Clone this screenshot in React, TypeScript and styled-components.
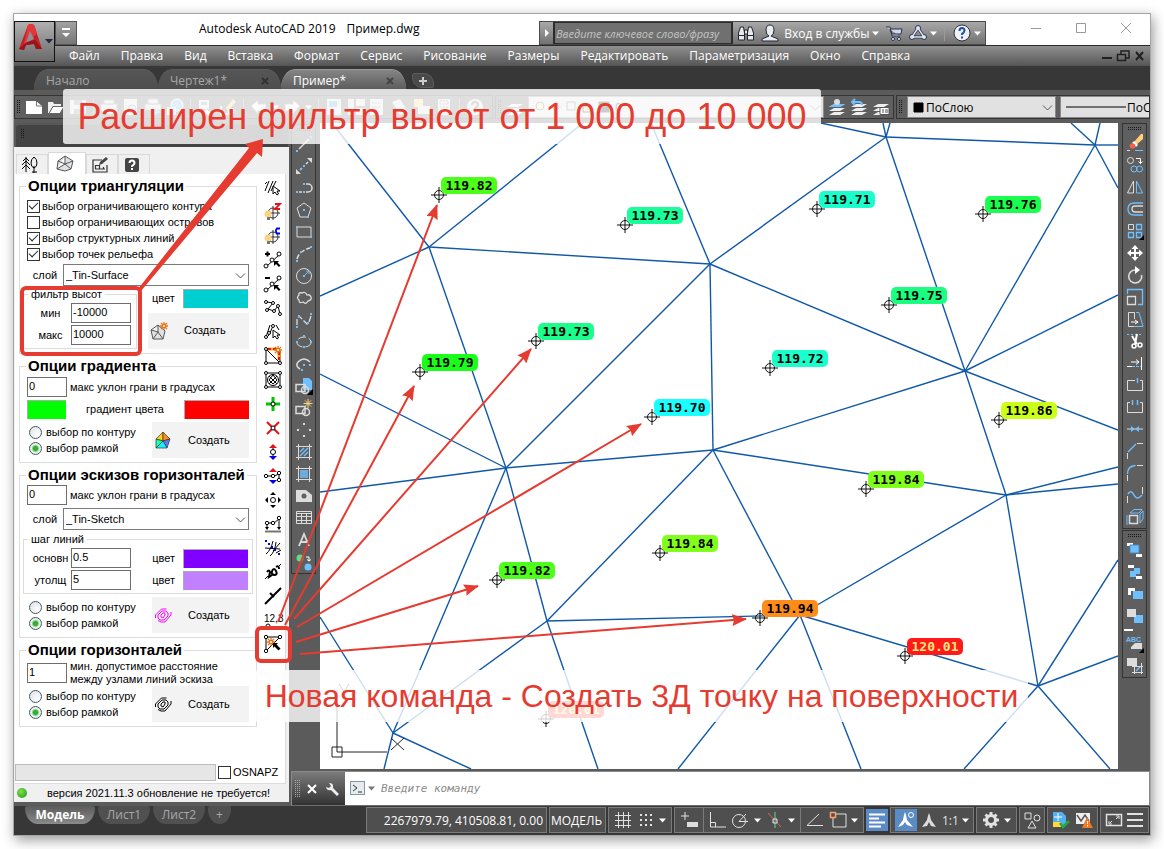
import React, { ReactNode } from "react";
import styled, { createGlobalStyle, css } from "styled-components";

const UI = `"Open Sans", "Noto Sans", sans-serif`;
const CLASSIC = `"Liberation Sans", Arial, sans-serif`;
const MONO = `"DejaVu Sans Mono", monospace`;
const RED = "#e53b30";
const SKY = "#6fc0ff";

const Global = createGlobalStyle`
  * { box-sizing: border-box; }
  body { margin: 0; background: #fff; font-family: ${UI}; font-size: 12px; color: #000; }
  button, input, select { font: inherit; color: inherit; margin: 0; }
  button { padding: 0; border: 0; background: none; cursor: pointer; }
`;

const Page = styled.div`padding: 13px;`;
const Window = styled.div`
  position: relative;
  display: flex;
  flex-direction: column;
  border: 1px solid #a6a6a6;
  background: #5b5b5b;
  box-shadow: 2px 4px 12px rgba(0, 0, 0, 0.4);
`;

/* ---------- icons ---------- */
const Svg = styled.svg<{ $s?: number }>`
  display: block;
  flex: none;
  width: ${(p) => p.$s ?? 18}px;
  height: ${(p) => p.$s ?? 18}px;
  overflow: visible;
`;
const Ico = ({ children, s = 18 }: { children: ReactNode; s?: number }) => (
  <Svg $s={s} viewBox={`0 0 ${s} ${s}`} fill="none" stroke="currentColor" aria-hidden="true">{children}</Svg>
);
const dots = (pts: number[][], r = 1, fill = SKY) =>
  pts.map(([x, y], i) => <rect key={i} x={x - r} y={y - r} width={r * 2} height={r * 2} fill={fill} stroke="none" />);
const rings = (pts: number[][], r = 2) =>
  pts.map(([x, y], i) => <circle key={i} cx={x} cy={y} r={r} fill="#fff" stroke="#000" />);

/* ---------- title bar ---------- */
const TitleBar = styled.header`
  display: flex;
  height: 31px;
  padding-top: 7px;
  background: #fff;
`;
const QuickMenu = styled.button`
  margin-left: 41px;
  width: 22px;
  height: 24px;
  display: grid;
  place-items: center;
  border: 1px solid #555;
  background: linear-gradient(#a2a2a2, #777);
  color: #fff;
`;
const Title = styled.h1`
  flex: 1;
  display: flex;
  gap: 11px;
  margin: 0;
  padding-left: 122px;
  font-size: 12px;
  line-height: 16px;
  font-weight: 400;
  white-space: pre;
`;
const InfoBar = styled.div`
  display: flex;
  align-items: center;
  width: 447px;
  height: 24px;
  padding-right: 4px;
  border: 1px solid #4a4a4a;
  background: linear-gradient(#a8a8a8, #727272);
  color: #fff;
`;
const Search = styled.input`
  width: 180px;
  height: 22px;
  margin-left: 13px;
  padding: 0 1px;
  border: 1px solid #2c2c2c;
  border-width: 1px 2px;
  background: #707070;
  font-size: 11px;
  font-style: italic;
  &::placeholder { color: #c4c4c4; opacity: 1; }
`;
const SearchWrap = styled.label`
  display: grid;
  align-items: center;
  & > * { grid-area: 1 / 1; }
`;
const InfoTools = styled.div`
  flex: 1;
  display: flex;
  align-items: center;
  justify-content: space-between;
  padding-left: 4px;
`;
const TextButton = styled.button`
  display: flex;
  align-items: center;
  gap: 3px;
  font-size: 12px;
  white-space: nowrap;
`;
const IconButton = styled.button`display: grid; place-items: center; flex: none;`;
const WinControls = styled.div`
  display: flex;
  gap: 29px;
  padding: 0 16px 0 42px;
  height: 16px;
  color: #999;
`;
const AppButton = styled.button`
  position: absolute;
  z-index: 2;
  left: 0;
  top: 7px;
  width: 41px;
  height: 41px;
  border: 1px solid #111;
  background: linear-gradient(#b0b0b0, #6b6b6b);
`;
const MenuBar = styled.nav`
  display: flex;
  align-items: center;
  gap: 21px;
  height: 21px;
  padding: 0 4px 0 55px;
  border-top: 1px solid #2b2b2b;
  background: linear-gradient(#909090, #555);
  color: #fff;
  a { color: inherit; text-decoration: none; white-space: nowrap; font-size: 12px; line-height: 16px; }
`;
const DocControls = styled.div`display: flex; gap: 2px; margin-left: auto; color: #202020;`;

/* ---------- document tabs ---------- */
const TabStrip = styled.div`
  display: flex;
  align-items: flex-end;
  height: 24px;
  padding-left: 20px;
  background: #373737;
`;
const DocTab = styled.div<{ $active?: boolean; $w: number }>`
  display: flex;
  align-items: center;
  justify-content: space-between;
  width: ${(p) => p.$w}px;
  height: 21px;
  padding: 2px 12px 0 12px;
  border-radius: 14px 14px 0 0 / 20px 20px 0 0;
  border-top: 1px solid ${(p) => (p.$active ? "#999" : "#5c5c5c")};
  background: ${(p) => (p.$active ? "linear-gradient(#858585, #5b5b5b)" : "linear-gradient(#565656, #4d4d4d)")};
  color: ${(p) => (p.$active ? "#fff" : "#a8a8a8")};
  font-size: 12px;
  line-height: 16px;
`;
const NewTab = styled.button`
  width: 22px;
  height: 15px;
  margin: 0 0 2px 6px;
  display: grid;
  place-items: center;
  border: 1px solid #5a5a5a;
  border-radius: 2px 10px 2px 10px;
  background: #4a4a4a;
  color: #ccc;
`;

/* ---------- top toolbars ---------- */
const ToolRow = styled.div`
  display: flex;
  gap: 2px;
  height: 33px;
  padding: 5px 0 4px;
  overflow: hidden;
`;
const Bar = styled.div<{ $w?: number }>`
  display: flex;
  align-items: center;
  gap: 4px;
  flex: ${(p) => (p.$w ? "none" : "1 0 0")};
  width: ${(p) => (p.$w ? p.$w + "px" : "auto")};
  height: 24px;
  padding-left: 2px;
  border: 1px solid #343434;
  background: #5f5f5f;
  color: #fff;
  overflow: hidden;
`;
const Grip = styled.span<{ $h?: boolean; $light?: boolean }>`
  flex: none;
  width: ${(p) => (p.$h ? "14px" : p.$light ? "6px" : "4px")};
  height: ${(p) => (p.$h ? "4px" : p.$light ? "18px" : "14px")};
  background-image: conic-gradient(from 0deg at 1px 1px, transparent 270deg, ${(p) => (p.$light ? "#a5a5a5" : "#161616")} 0);
  background-size: 2px 2px;
`;
const Sep = styled.span`flex: none; width: 1px; height: 16px; margin: 0 2px; background: #9b9b9b;`;
const ComboWrap = styled.span<{ $w: number }>`
  display: grid;
  grid-template-columns: 100%;
  align-items: center;
  flex: none;
  width: ${(p) => p.$w}px;
  color: #000;
  & > * { grid-area: 1 / 1; }
  & > svg:last-child { justify-self: end; margin-right: 4px; pointer-events: none; }
`;
const Combo = styled.select<{ $pad: number; $grey?: boolean }>`
  appearance: none;
  width: 100%;
  height: 22px;
  padding: 0 16px 0 ${(p) => p.$pad}px;
  border: 1px solid ${(p) => (p.$grey ? "#8a8a8a" : "#7a7a7a")};
  border-radius: 0;
  background: ${(p) => (p.$grey ? "#e1e1e1" : "#fff")};
`;
const ComboIcons = styled.span`
  z-index: 1;
  display: flex;
  gap: 4px;
  padding-left: 6px;
  pointer-events: none;
`;
const Chevron = () => <Ico s={9}><path d="M0 2.500 4.500 7 9 2.500" stroke="#555" /></Ico>;
const Tri = ({ c = "#fff" }: { c?: string }) => <Ico s={7}><path d="M0 1.500h7L3.500 5.500z" fill={c} stroke="none" /></Ico>;

/* ---------- palette ---------- */
const Body = styled.div`display: flex;`;
const Palette = styled.aside`
  flex: none;
  width: 276px;
  display: flex;
  flex-direction: column;
  padding-bottom: 4px;
  font-family: ${CLASSIC};
  font-size: 11px;
  line-height: 13px;
`;
const PaletteHead = styled.div`
  height: 24px;
  padding: 4px 5px;
  border: 2px solid #575757;
  border-bottom: 0;
  border-radius: 5px 5px 0 0;
  background: #434343;
  & > ${Grip} { display: block; height: 10px; }
`;
const PaletteBody = styled.div`
  flex: 1;
  display: flex;
  flex-direction: column;
  margin-right: 1px;
  padding: 5px 3px 0 1px;
  background: #f0f0f0;
`;
const PaletteTabs = styled.div`display: flex; align-items: flex-end; height: 22px; padding-left: 1px;`;
const PaletteTab = styled.button<{ $active?: boolean }>`
  display: grid;
  place-items: center;
  width: ${(p) => (p.$active ? 38 : 32)}px;
  height: ${(p) => (p.$active ? 22 : 20)}px;
  padding-right: 4px;
  border: 1px solid #d9d9d9;
  border-bottom: 0;
  background: ${(p) => (p.$active ? "#fff" : "#f0f0f0")};
`;
const PaletteSheet = styled.div`
  flex: 1;
  display: flex;
  padding: 2px 4px 0 4px;
  border: 1px solid #dcdcdc;
  border-width: 0 1px 0 0;
  background: #fff;
`;
const Groups = styled.div`width: 238px; padding-top: 2px; display: flex; flex-direction: column; gap: 4px;`;
const Group = styled.fieldset<{ $top: number }>`
  min-width: 0;
  margin: 0;
  padding: ${(p) => p.$top}px 7px 4px 7px;
  border: 1px solid #dcdcdc;
  & > legend {
    margin-left: -1px;
    padding: 0 2px;
    font-weight: 700;
    font-size: 15px;
    line-height: 16px;
    white-space: nowrap;
  }
`;
const SubGroup = styled.fieldset<{ $w?: number }>`
  min-width: 0;
  width: ${(p) => (p.$w ? p.$w + "px" : "auto")};
  margin: 0 -4px;
  padding: 3px 4px 3px 6px;
  border: 1px solid #dcdcdc;
  & > legend { margin-left: -2px; padding: 0 3px; line-height: 12px; }
`;
const CheckLabel = styled.label<{ $gap?: number }>`
  display: flex;
  align-items: center;
  gap: ${(p) => p.$gap ?? 2}px;
  height: 16px;
  white-space: nowrap;
`;
const tick = css`
  appearance: none;
  flex: none;
  width: 13px;
  height: 13px;
  border: 1px solid #333;
  background: #fff;
`;
const Tick = styled.input`
  ${tick}
  &:checked { display: grid; place-items: center; }
  &:checked::after {
    content: "";
    width: 8px;
    height: 4px;
    margin-bottom: 3px;
    border: solid #222;
    border-width: 0 0 1px 1px;
    transform: rotate(-45deg);
  }
`;
const Radio = styled.input`
  ${tick}
  border-color: #44586b;
  border-radius: 50%;
  background: radial-gradient(circle at 70% 70%, #fff, #dcdfe2);
  &:checked { background: radial-gradient(circle, #2fae2f 0 2px, #e8f3e8 4px); }
`;
const Stack = styled.div<{ $gap?: number }>`
  display: flex;
  flex-direction: column;
  gap: ${(p) => p.$gap ?? 0}px;
`;
const FieldName = styled.span<{ $w: number }>`
  width: ${(p) => p.$w}px;
  text-align: center;
  white-space: nowrap;
`;
const Field = styled.input<{ $w: number }>`
  width: ${(p) => p.$w}px;
  height: 20px;
  padding: 0 1px 2px;
  border: 1px solid #6e6e6e;
  background: #fff;
  font-size: 11px;
`;
const LabelRow = styled.label<{ $gap?: number; $pad?: number }>`
  display: flex;
  align-items: center;
  gap: ${(p) => p.$gap ?? 0}px;
  padding-left: ${(p) => p.$pad ?? 0}px;
  white-space: nowrap;
`;
const Swatch = styled.button<{ $c: string; $w: number }>`
  flex: none;
  width: ${(p) => p.$w}px;
  height: 19px;
  border: 1px solid #aaa;
  border-width: 1px 0 0 1px;
  background: ${(p) => p.$c};
`;
const Create = styled.button<{ $w?: number }>`
  flex: none;
  display: flex;
  align-items: center;
  gap: 16px;
  width: ${(p) => p.$w ?? 97}px;
  height: 36px;
  padding-left: 2px;
  background: #f3f3f3;
  font-size: 11px;
`;
const Split = styled.div`display: flex; justify-content: space-between; align-items: center;`;
const Commands = styled.div`
  display: flex;
  flex-direction: column;
  align-items: center;
  width: 22px;
  margin-left: 5px;
  color: #000;
`;
const Command = styled.button`
  display: grid;
  place-items: center;
  width: 22px;
  height: 24px;
`;
const PaletteFoot = styled.div`
  display: flex;
  align-items: center;
  gap: 2px;
  height: 22px;
  background: #fff;
  border-bottom: 1px solid #dcdcdc;
  border-right: 1px solid #dcdcdc;
`;
const Progress = styled.div`width: 201px; height: 17px; border: 1px solid #bcbcbc; background: #e6e6e6;`;
const Version = styled.div`
  display: flex;
  align-items: center;
  gap: 20px;
  height: 18px;
  padding-left: 2px;
  white-space: nowrap;
`;
const Led = styled.span`
  width: 10px;
  height: 10px;
  border-radius: 50%;
  background: radial-gradient(circle at 40% 35%, #7ede50, #1e9a10);
`;

/* ---------- work area ---------- */
const Main = styled.main`flex: 1; min-width: 0; display: flex; flex-direction: column; gap: 2px;`;
const Work = styled.div`flex: 1; display: flex;`;
const SideRail = styled.div<{ $w: number; $pad: string }>`
  flex: none;
  width: ${(p) => p.$w}px;
  padding: ${(p) => p.$pad};
  display: flex;
  flex-direction: column;
  gap: 1px;
`;
const ToolColumn = styled.div`
  display: flex;
  flex-direction: column;
  align-items: center;
  padding: 3px 0 0;
  border: 1px solid #343434;
  background: #5f5f5f;
  color: #dcdcdc;
  & > ${Grip} { margin-bottom: 1px; }
`;
const Tool = styled.button`display: grid; place-items: center; width: 22px; height: 22px;`;
const Fly = styled.span`width: 9px; height: 2px; margin: 2px 12px 2px 0; background: #fff;`;
const Canvas = styled.section`
  position: relative;
  flex: 1;
  min-width: 0;
  overflow: hidden;
  background: #fff;
`;
const Mesh = styled.svg`display: block; width: 100%; height: 646px;`;
const PointLabel = styled.span<{ $c: string; $fg?: string }>`
  position: absolute;
  width: 56px;
  border-radius: 5px;
  background: ${(p) => p.$c};
  color: ${(p) => p.$fg ?? "#000"};
  font: 700 13px/17px ${MONO};
  text-align: center;
`;
const CommandLine = styled.div`display: flex; height: 35px; border: 1px solid #8a8a8a; border-bottom-color: #6d6d6d; margin-left: 1px;`;
const CommandHandle = styled.div`
  display: flex;
  align-items: center;
  gap: 5px;
  width: 53px;
  padding-left: 3px;
  background: linear-gradient(#7b7b7b, #333);
  color: #fff;
`;
const Prompt = styled.label`
  flex: 1;
  display: flex;
  align-items: center;
  gap: 3px;
  padding-left: 5px;
  background: #fff;
`;
const PromptInput = styled.input`
  flex: 1;
  margin-left: 3px;
  padding: 0;
  border: 0;
  outline: 0;
  font: italic 11px ${MONO};
  &::placeholder { color: #8c8c8c; opacity: 1; }
`;

/* ---------- status bar ---------- */
const Bottom = styled.footer`
  display: flex;
  justify-content: space-between;
  height: 29px;
  background: #373737;
`;
const SheetTabs = styled.div`display: flex; gap: 3px; padding-left: 11px;`;
const SheetTab = styled.button<{ $active?: boolean; $w: number }>`
  width: ${(p) => p.$w}px;
  height: 18px;
  border-radius: 2px 2px 14px 14px / 2px 2px 18px 18px;
  background: ${(p) => (p.$active ? "linear-gradient(#5b5b5b, #8a8a8a)" : "#505050")};
  color: ${(p) => (p.$active ? "#fff" : "#a8a8a8")};
  font-size: 12px;
  font-weight: ${(p) => (p.$active ? 700 : 400)};
  line-height: 16px;
`;
const Status = styled.div`display: flex; align-items: center; gap: 2px; padding: 0 1px 1px 0; color: #e2e2e2;`;
const Cell = styled.div<{ $w: number; $end?: boolean }>`
  display: flex;
  align-items: center;
  justify-content: ${(p) => (p.$end ? "flex-end" : "space-evenly")};
  width: ${(p) => p.$w}px;
  height: 26px;
  padding: 0 ${(p) => (p.$end ? 3 : 0)}px;
  border: 1px solid #7b7b7b;
  background: #4f4f4f;
  color: ${(p) => (p.$end ? "#fff" : "inherit")};
  font-size: 12px;
  white-space: nowrap;
`;
const Toggle = styled.button<{ $on?: boolean }>`
  display: grid;
  place-items: center;
  width: 22px;
  height: 22px;
  background: ${(p) => (p.$on ? "#5b8bc5" : "none")};
  color: ${(p) => (p.$on ? "#fff" : "inherit")};
`;
const Rule = styled.span`width: 1px; height: 24px; background: #7b7b7b;`;

/* ---------- annotations ---------- */
const Marks = styled.svg`
  position: absolute;
  z-index: 4;
  left: -14px;
  top: -14px;
  width: 1164px;
  height: 849px;
  pointer-events: none;
`;
const Banner = styled.p<{ $x: number; $y: number; $w: number; $h: number; $size: number }>`
  position: absolute;
  z-index: 3;
  left: ${(p) => p.$x}px;
  top: ${(p) => p.$y}px;
  width: ${(p) => p.$w}px;
  height: ${(p) => p.$h}px;
  margin: 0;
  border-radius: 3px;
  background: rgba(255, 255, 255, 0.8);
  color: ${RED};
  font: ${(p) => p.$size}px / ${(p) => p.$h}px ${CLASSIC};
  text-align: center;
  white-space: nowrap;
`;

/* ---------- data ---------- */
const menu = ["Файл", "Правка", "Вид", "Вставка", "Формат", "Сервис", "Рисование", "Размеры", "Редактировать", "Параметризация", "Окно", "Справка"];

const edges = [
  [332, 123, 429, 247], [320, 296, 429, 247], [583, 123, 429, 247], [429, 247, 506, 468], [429, 247, 710, 264],
  [651, 123, 710, 264], [710, 264, 886, 137], [821, 123, 886, 137], [883, 123, 886, 137], [890, 123, 886, 137],
  [886, 137, 1095, 145], [886, 137, 965, 371], [1071, 123, 1095, 145], [1100, 123, 1095, 145], [1095, 145, 1118, 145],
  [1095, 145, 965, 371], [1095, 145, 1118, 188], [710, 264, 965, 371], [710, 264, 713, 450], [710, 264, 506, 468],
  [320, 374, 506, 468], [320, 492, 506, 468], [506, 468, 713, 450], [713, 450, 965, 371], [713, 450, 1006, 495],
  [713, 450, 800, 615], [713, 450, 547, 621], [506, 468, 547, 621], [506, 468, 393, 733], [965, 371, 1006, 495],
  [965, 371, 1118, 295], [965, 371, 1118, 430], [1006, 495, 1118, 467], [1006, 495, 1118, 484], [1006, 495, 1038, 686],
  [1006, 495, 800, 615], [1038, 686, 1118, 560], [1038, 686, 1118, 656], [1038, 686, 800, 615], [1038, 686, 1110, 769],
  [1038, 686, 964, 769], [800, 615, 547, 621], [547, 621, 598, 769], [800, 615, 678, 769], [800, 615, 861, 769],
  [547, 621, 393, 733], [320, 617, 393, 733], [393, 733, 384, 769], [393, 733, 471, 769],
];
const points: [number, number, string, string, string?][] = [
  [439, 195, "119.82", "#4dff1a"], [625, 225, "119.73", "#1aff99"], [817, 209, "119.71", "#1affcc"],
  [983, 214, "119.76", "#1aff4d"], [889, 305, "119.75", "#1aff80"], [536, 341, "119.73", "#1aff8c"],
  [420, 372, "119.79", "#1aff1a"], [770, 368, "119.72", "#1affcc"], [652, 417, "119.70", "#1affff"],
  [999, 420, "119.86", "#ccff1a"], [866, 489, "119.84", "#80ff1a"], [660, 553, "119.84", "#80ff1a"],
  [497, 580, "119.82", "#4dff1a"], [760, 618, "119.94", "#ff8c1a"], [905, 656, "120.01", "#ff1a1a", "#ffe680"],
  [546, 719, "120.01", "#ff3a2a", "#ffe680"],
];
const arrows = [
  [278, 622, 437, 205], [285, 625, 414, 386], [294, 619, 531, 349], [297, 627, 641, 424], [296, 642, 478, 586], [300, 654, 746, 619],
];

const pointer = <path d="M9 7v8l2-2 2 3 1.500-1-1.500-3h3z" fill="#fff" stroke="#000" />;
const smallArrow = <path d="M10 10h5l-1.500 1.500 3 3-1.500 1.500-3-3L10 15z" fill="#000" stroke="none" />;
const bulb = <><circle cx="9" cy="10" r="5" stroke="#333" /><path d="M9 3v14M3 10h13" stroke="#333" /><circle cx="4" cy="11" r="3.500" fill="#fdd27e" stroke="none" /><rect x="3" y="14" width="3" height="3" fill="#777" stroke="none" /></>;
const star = (x: number, y: number) => (
  <g transform={`translate(${x} ${y})`}><path d="M-4 0h8M0-4v8M-3-3l6 6M3-3l-6 6" stroke="#e8740c" strokeWidth="1.300" /><circle r="1.600" fill="#fff3a0" stroke="#d33" strokeWidth=".5" /></g>
);

const commands: [string, ReactNode][] = [
  ["Линии", <><path d="M1 12 5 2M4 14 9 2M7 12l5-10M1 5l2-2" />{pointer}</>],
  ["Высота Z", <>{bulb}<path d="M11 1h5l-5 5h5" stroke="#e11" strokeWidth="1.800" /></>],
  ["Цвет C", <>{bulb}<path d="M16 1.500h-3L12 3v2l1 1.500h3" stroke="#00e" strokeWidth="1.800" /></>],
  ["Добавить связь", <><path d="M1 3h5M3.500.5v5" strokeWidth="2" /><path d="m3 15 12-11" />{rings([[2, 15], [8, 9], [15, 3]])}{smallArrow}</>],
  ["Удалить связь", <><path d="M1 3h5" strokeWidth="2" /><path d="m3 15 12-11" />{rings([[2, 15], [8, 9], [15, 3]])}{smallArrow}</>],
  ["Полилиния", <><path d="m3 3 6 1-5 6 6 2 4-5 2 8" />{rings([[2, 3], [9, 4], [3, 11], [10, 12], [14, 7], [16, 15]], 1.5)}</>],
  ["Контур", <><path d="M6 2 2 14M9 3 5 12l-3 3M12 2l3 5" />{rings([[2, 14], [5, 10], [9, 3]], 1.5)}{pointer}</>],
  ["Рамка", <><path d="M2 2v14h14V4M2 2l14 14M2 2h12" /><path d="M4 2h8M15 5v8" stroke="#f2b51a" strokeWidth="3" /><path d="M4 2h8M15 5v8" stroke="#e11" strokeDasharray="3 2" strokeWidth="2" />{rings([[2, 2], [2, 16], [16, 16]], 1.5)}{star(14, 3)}</>],
  ["Область", <><path d="M2 2h14v14H2zM5 5l8 8M13 5l-8 8M9 4l4 5-4 4-4-4z" /><circle cx="9" cy="9" r="5.500" />{rings([[2, 2], [16, 2], [2, 16], [16, 16]], 1.5)}</>],
  ["Добавить точку", <><path d="M9 2v14M2 9h14" stroke="#00c400" strokeWidth="3" />{rings([[9, 9]])}</>],
  ["Удалить точку", <><path d="m3 3 12 12M15 3 3 15" stroke="#e11" strokeWidth="2" />{rings([[9, 9]])}</>],
  ["Поднять точку", <><path d="M9 4v10" /><path d="M5 5h8L9 1z" fill="#e11" stroke="none" /><path d="M5 13h8l-4 4z" fill="#00e" stroke="none" />{rings([[9, 9]], 2.5)}</>],
  ["Поднять линию", <><path d="M5 5h8L9 1z" fill="#e11" stroke="none" /><path d="M5 13h8l-4 4z" fill="#00e" stroke="none" /><path d="M2 9h8l5-2v6" />{rings([[2, 9], [9, 9], [15, 6], [15, 13]], 1.7)}</>],
  ["Переместить", <>{rings([[9, 9]], 2.5)}<path d="M6 4h6L9 1zM6 14h6l-3 3zM4 6v6L1 9zM14 6v6l3-3z" fill="#000" stroke="none" /></>],
  ["На поверхность", <><path d="M2 8h8l5-4M3 9v4M15 5v8" />{rings([[3, 8], [9, 8], [15, 3]], 1.7)}<path d="M1 16.500h16" stroke="#777" strokeWidth="2" /><path d="M1 12h4l-2 3zM13 12h4l-2 3z" fill="#000" stroke="none" /></>],
  ["Обрезать", <><path d="M2 15Q7 11 9 2M6 17q5-4 6-14M1 9l15 1M9 12l7-8M12 14l5-3" />{dots([[2, 2], [5, 5], [8, 8], [11, 11], [15, 15]], 1, "#00e")}</>],
  ["Подпись", <><path d="M1 16l3-3M14 4l3-3" /><path d="M3 9q2-3 3 0l-1 5 3-2M8 8q2-4 4 0t-2 4q-3-1-2-4M12 4q3-2 3 2" strokeWidth="2" /></>],
  ["Бергштрих", <path d="M1 17 17 1M6 6l4 4" strokeWidth="2" />],
  ["Отметка 12,3", <><text x="0" y="11" fontFamily={CLASSIC} fontSize="10" fill="#000" stroke="none">12,3</text>{rings([[4, 15]])}</>],
  ["3Д точка", <><path d="M2 2h14L2 16z" />{rings([[2, 2], [16, 2], [2, 16]], 1.7)}{star(7, 7)}<path d="M9 8h5l-1.500 1.500 4 4-2 2-4-4L9 13z" fill="#000" stroke="none" /></>],
];

const draw: [string, ReactNode][] = [
  ["Отрезок", <><path d="m4 14 10-10" strokeWidth="1.500" />{dots([[2, 16], [16, 2]])}</>],
  ["Прямая", <><path d="m5 13 2-2M11 7l2-2" strokeWidth="1.500" /><path d="M1 17v-5l5 5zM17 1v5l-5-5z" fill="#dcdcdc" stroke="none" />{dots([[9, 9], [6, 12]])}</>],
  ["Полилиния", <><path d="M4 13h3M11 13h2a4 4 0 0 0 0-8h-2" strokeWidth="1.500" />{dots([[2, 13], [9, 13], [9, 5]])}</>],
  ["Многоугольник", <><path d="m9 2 7 5-3 9H5L2 7z" />{dots([[9, 9], [13, 16]])}</>],
  ["Прямоугольник", <><path d="M2 4h14v10H2z" />{dots([[2, 4], [16, 14]])}</>],
  ["Дуга", <><path d="M2 14Q4 6 15 3" strokeDasharray="5 2" strokeWidth="1.500" />{dots([[2, 16], [6, 7], [16, 2]])}</>],
  ["Круг", <><circle cx="9" cy="9" r="7.500" /><path d="m10 8 4-4m-3 0h3v3" stroke={SKY} />{dots([[9, 9]])}</>],
  ["Облако", <path d="M4 6q-3 3 0 5 0 4 4 2 3 3 5-1 4-1 3-4-1-3-4-2-2-4-5-2-4-1-3 2z" strokeWidth="1.300" />],
  ["Сплайн", <><path d="M2 14V8l2-3 8 8 2-2 2-6" strokeDasharray="6 2" strokeWidth="1.300" />{dots([[2, 16], [4, 5], [13, 12], [16, 3]])}</>],
  ["Эллипс", <><ellipse cx="9" cy="9" rx="7" ry="5" strokeDasharray="8 3" />{dots([[9, 3], [2, 9], [16, 9], [9, 14]])}</>],
  ["Эллиптическая дуга", <><path d="M5 14Q0 11 3 7q6-6 12 0" strokeWidth="1.500" />{dots([[9, 10], [15, 10], [7, 15]])}</>],
  ["Вставить блок", <><path d="M8 1h6l3 3v9H8z" fill={SKY} stroke="none" /><path d="M18 12v6h-6z" fill="#000" stroke="none" /><path d="M1 7.500h9v7H1z" strokeWidth="1.500" /><circle cx="10" cy="13" r="3.500" strokeWidth="1.500" /></>],
  ["Создать блок", <><path d="M1 7.500h9v7H1z" strokeWidth="1.500" /><circle cx="11" cy="13" r="3.500" strokeWidth="1.500" /><path d="M13 0v9M8.500 4.500h9M10 1.500l6 6M16 1.500l-6 6" stroke="#ffd27a" /></>],
  ["Точка", dots([[9, 3], [3, 9], [15, 9], [9, 15]], 1, "#dcdcdc")],
  ["Штриховка", <><path d="m5 9 4-4M5 13l8-8M9 13l4-4" stroke={SKY} strokeWidth="1.500" /><path d="M3.500 1v16M14.500 1v16M1 3.500h16M1 14.500h16" /></>],
  ["Градиент", <><rect x="5" y="5" width="8" height="8" fill={SKY} fillOpacity=".8" stroke="none" /><path d="M3.500 1v16M14.500 1v16M1 3.500h16M1 14.500h16" /></>],
  ["Область", <><path d="M1 3h10l6 5v7H1z" fill="#dcdcdc" stroke="none" /><circle cx="9" cy="9" r="2.500" fill="#5f5f5f" stroke="none" /></>],
  ["Таблица", <path d="M1.500 2.500h15v12h-15zM1 4.500h16M2 7.500h15M2 11.500h15M6.500 4v11M11.500 4v11" />],
  ["Текст", <path d="m4 15 5-12 5 12M6 11h6" strokeWidth="1.800" />],
  ["Добавить выбранные", <><circle cx="5" cy="5" r="3.500" fill="#5fdc8a" stroke="none" /><circle cx="13" cy="14" r="3.500" fill={SKY} stroke="none" /><path d="M11 4h3v4m-2-1.500L14 8l2-1.500" stroke="#fff" /></>],
];

const modify: [string, ReactNode][] = [
  ["Стереть", <><path d="m8 8 7-8h2v5l-7 6z" fill="#ffd27a" stroke="none" /><path d="m8 7 4 4-2 2-4-4z" fill="#fff" stroke="none" /><circle cx="6.500" cy="12" r="2.800" fill="#f0604a" stroke="none" /><path d="M1 16.500h3" /><path d="M9 16.500h8" stroke={SKY} /></>],
  ["Копировать", <><circle cx="4.500" cy="4.500" r="3" /><path d="M10 2.500h4.500v5m-2-2 2 2 2-2" stroke="#fff" /><circle cx="8" cy="13" r="3" stroke={SKY} /><circle cx="13.500" cy="13" r="3" stroke={SKY} /></>],
  ["Зеркало", <><path d="M7.500 3v12h-6z" /><path d="M10.500 3v12h6z" stroke={SKY} /></>],
  ["Подобие", <><path d="M17 3H8q-6 0-6 6t6 6h9" stroke={SKY} strokeWidth="1.300" /><path d="M17 6H9q-3 0-3 3t3 3h8" strokeWidth="1.300" /></>],
  ["Массив", <><path d="M2.500 2.500h5v5h-5z" /><path d="M10.500 2.500h5v5h-5zM2.500 10.500h5v5h-5zM10.500 10.500h5v5h-5z" stroke={SKY} strokeWidth="1.300" /><path d="M18 13v5h-5z" fill="#000" stroke="none" /></>],
  ["Переместить", <><path d="M9 3v12M3 9h12" stroke="#fff" strokeWidth="2" /><path d="M5.500 5 9 1l3.500 4zM5.500 13 9 17l3.500-4zM5 5.500 1 9l4 3.500zM13 5.500 17 9l-4 3.500z" fill="#fff" stroke="none" /></>],
  ["Повернуть", <><path d="M10 4a6.500 6.500 0 1 0 5.500 5" strokeWidth="1.600" /><path d="m9 0 5 4-5 4z" fill="#fff" stroke="none" /></>],
  ["Масштаб", <><path d="M1.500 6V1.500h15v15H12" stroke={SKY} strokeWidth="1.300" /><path d="M1.500 8.500h8v8h-8z" strokeWidth="1.300" /></>],
  ["Растянуть", <><path d="M8.500 9V2.500h-6v14h6" /><path d="M10 2.500h3l4 14H9" stroke={SKY} /><path d="M5 12h7m-3-2 3 2-3 2" stroke="#fff" /></>],
  ["Обрезать", <><path d="M1 2.500h16" stroke={SKY} strokeDasharray="2 2" /><path d="m6 4 5 8M11 2 9 12" stroke="#fff" strokeWidth="2" /><circle cx="8" cy="14" r="2" stroke="#fff" strokeWidth="1.500" /><circle cx="14" cy="13" r="2" stroke="#fff" strokeWidth="1.500" /></>],
  ["Удлинить", <><path d="M15.500 3v13M5 8h8m-3-2.500L13 8l-3 2.500M1 12.500h5" stroke="#fff" /><path d="M6 12.500h9" stroke={SKY} strokeDasharray="3 1" /></>],
  ["Разорвать в точке", <><path d="M9 4.500H1.500v10h15v-10H14" /><path d="M11.500 2v5" stroke={SKY} strokeWidth="1.500" /></>],
  ["Разорвать", <><path d="M4 4.500H1.500v10h15v-10H14" /><path d="M6.500 2v5M11.500 2v5" stroke={SKY} strokeWidth="1.500" /></>],
  ["Соединить", <><path d="M1 9h16" /><path d="M5 6v6l4-3zM13 6v6L9 9z" fill={SKY} stroke="none" /></>],
  ["Фаска", <><path d="M1.500 17v-6M11 1.500h6" /><path d="m2 10 8-8" stroke={SKY} strokeWidth="1.300" /></>],
  ["Сопряжение", <><path d="M1.500 17v-6M11 1.500h6" /><path d="M1.500 10q0-8 8-8.500" stroke={SKY} strokeWidth="1.300" /></>],
  ["Слияние", <><path d="M1.500 17v-7M16.500 1v7" /><path d="M2 8q3-5 6 1t8 0" stroke={SKY} strokeWidth="1.500" /></>],
  ["Расчленить", <><path d="M3.500 7.500h8v8h-8z" strokeWidth="1.500" /><path d="M4 5l4-3.500h8L13 5zM14 6l3-3v8l-3 4zM1 7v10" stroke={SKY} /></>],
];
const order: [string, ReactNode][] = [
  ["На передний план", <><path d="M1 2h6v3H1zM10 13h6v3h-6z" fill="#fff" stroke="none" /><path d="M4 4h9v8H4z" fill={SKY} stroke="#4d88b8" /></>],
  ["На задний план", <><path d="M2 2h6v3H2zM10 13h6v3h-6z" fill="#fff" stroke="none" /><path d="M8 5h6v6h-4v3H4V8h4z" fill={SKY} stroke="none" /></>],
  ["Перед объектом", <><path d="M2 3h7v3H5v4H2z" fill="#fff" stroke="none" /><path d="M7 6h10v8H7z" fill={SKY} stroke="none" /></>],
  ["За объектом", <><path d="M8 8h9v8H8z" fill={SKY} stroke="none" /><path d="M1 2h9v8H1z" fill="#ddd" stroke="none" /></>],
];
const order2: [string, ReactNode][] = [
  ["Тексты вперед", <><text x="0" y="7" fontFamily={CLASSIC} fontSize="7" fontWeight="700" fill={SKY} stroke="none">ABC</text><path d="m5 12 4-4h7v6H5z" fill="#ddd" stroke="none" /><path d="M18 13v5h-5z" fill="#000" stroke="none" /></>],
  ["Штриховка назад", <><path d="M1 1h10v8H1z" fill="#ddd" stroke="none" /><path d="M8.500 7v10M15.500 6v11M6 9.500h11M6 15.500h11" /><path d="m10 14 4-4" stroke={SKY} strokeWidth="1.500" /></>],
];

const layersIcon = (extra?: ReactNode) => (
  <Ico><path d="M1 13l5-3h11l-5 3zM1 17l5-3h11l-5 3zM1 9l5-3h11l-5 3z" fill="#eee" stroke="none" />{extra}</Ico>
);
const std: ReactNode[] = [
  <Ico><path d="M1 3h10l6 5v8H1z" fill="#fff" stroke="none" /><path d="M11.500 3v5H17" stroke="#777" /></Ico>,
  <Ico><path d="M1 15V4h5l1 2h7v2H6L2 15" fill="#eee" stroke="none" /><path d="M6 8.500h11l-4 7H2z" fill="#fff" stroke="#666" /></Ico>,
  <Ico><path d="M1 2h16v14H1z" fill="#ddd" stroke="none" /><path d="M5 2h8v5H5zM5 11h8v5H5z" fill="#888" stroke="none" /></Ico>,
  <Sep />,
  <Ico><path d="M1 6h16v7H1zM4 2h10v4H4zM4 12h10v4H4z" fill="#ddd" stroke="#888" /></Ico>,
  <Ico><path d="M2 1h13v16H2z" fill="#ddd" stroke="none" /><circle cx="10" cy="11" r="4" stroke="#777" /></Ico>,
  <Ico><path d="M1 6h16v6H1zM4 1h10v5H4z" fill="#ddd" stroke="#888" /><path d="m9 10 8 4-8 4z" fill={SKY} stroke="none" /></Ico>,
  <Ico><circle cx="11" cy="7" r="6" fill="#6ab4e8" stroke="#fff" /><path d="M1 9h9v8H1z" fill="#ddd" stroke="none" /></Ico>,
  <Sep />,
  <Ico><path d="M2 2h10v9H2z" fill="#ddd" stroke="none" /><path d="M4 4h6v3H4z" fill="#59a" stroke="none" /><path d="m9 11 7 5-4 2-5-4z" fill="#fff" stroke="none" /></Ico>,
  <Ico><path d="m7 10 7-9 3 3-8 8z" fill="#ffc660" stroke="none" /><path d="M2 8v8h8" stroke="#ddd" strokeWidth="2" /><circle cx="12" cy="13" r="3" /></Ico>,
  <Sep />,
  <Ico><path d="M1 8l7-6v4h8v7H8v3z" fill="#fff" stroke="#777" /></Ico>,
  <Tri />,
  <Ico><path d="M17 8l-7-6v4H2v7h8v3z" fill="#fff" stroke="#777" /></Ico>,
  <Tri />,
  <Sep />,
  <Ico><path d="M2 1h14v16H2z" fill="#ddd" stroke="none" /><path d="M4 3h8v6H4z" fill="#59c" stroke="none" /></Ico>,
  <Ico><path d="M1 1h6v16H1zM9 1h9v7H9zM9 10h9v7H9z" fill="#ddd" stroke="none" /></Ico>,
  <Ico><path d="M1 1h13v16H1z" fill="#ddd" stroke="none" /><path d="M3 5h9M3 9h9M3 13h9" stroke="#777" strokeDasharray="2 1" /></Ico>,
  <Ico><path d="M1 4l8-3 8 13-8 3z" fill="#ddd" stroke="none" /></Ico>,
  <Ico><path d="M1 1h9v8H1z" fill="#ffd27a" stroke="none" /><path d="M5 8h12v8H5z" fill="#ddd" stroke="none" /></Ico>,
  <Ico><path d="M3 1h12v16H3z" fill="#ddd" stroke="none" /><path d="M5 3h8v3H5zM5 9h8M5 12h8M5 15h8" stroke="#666" strokeDasharray="2 1" /></Ico>,
  <Sep />,
  <Ico><circle cx="9" cy="9" r="8" fill="#ddd" stroke="none" /><path d="M6 7q0-3 3-3t3 3q0 1-3 3v1M9 13v2" stroke="#555" strokeWidth="2" /></Ico>,
];

const Rhombs = ({ c }: { c: string }) => (
  <Ico><g stroke={c}><path d="M1.500 12V9l6-6h5M4 14.500 7 16h4l6-7V6" /><path d="M4 12V9l4-4h4l2 2v3l-4 4H6z" /><path d="M7 11V9l2-2h2v2l-2 3z" /></g></Ico>
);

const Buttons = ({ items }: { items: [string, ReactNode][] }) => (
  <>{items.map(([name, art]) => <Tool key={name} aria-label={name}><Ico>{art}</Ico></Tool>)}</>
);
const Choice = ({ name }: { name: string }) => (
  <Stack>
    <CheckLabel $gap={4}><Radio type="radio" name={name} />выбор по контуру</CheckLabel>
    <CheckLabel $gap={4}><Radio type="radio" name={name} defaultChecked />выбор рамкой</CheckLabel>
  </Stack>
);
const ChoicePad = styled.div`padding-left: 2px;`;
const Layer = ({ value }: { value: string }) => (
  <LabelRow>
    <FieldName $w={36}>слой</FieldName>
    <ComboWrap $w={186}><Combo $pad={2}><option>{value}</option></Combo><Chevron /></ComboWrap>
  </LabelRow>
);
const ColorRow = ({ c, pad }: { c: string; pad?: number }) => (
  <LabelRow $gap={8} $pad={pad}>цвет<Swatch $c={c} $w={65} aria-label="цвет" /></LabelRow>
);

export default function App() {
  return (
    <Page>
      <Global />
      <Window>
        <AppButton aria-label="AutoCAD">
          <svg width="39" height="39" viewBox="0 0 39 39" aria-hidden="true">
            <path d="M4 27 13 3q2-2 6 0l8 24h-6l-2-5-8 1-2 5z" fill="#c32128" />
            <path d="M13 3q2-2 6 0l3 8-9 10-4 1z" fill="#e2383c" />
            <path d="m15 9 4 8-8 4z" fill="#8f9096" />
            <path d="m4 27 8-7 8-2 7 9h-6l-2-5-8 1-2 5z" fill="#9c1219" />
            <path d="M30 17h8l-4 4.500z" fill="#222b38" />
          </svg>
        </AppButton>
        <TitleBar>
          <QuickMenu aria-label="Настройка"><Ico s={10}><path d="M1 1h8" strokeWidth="2" /><path d="M1 5h8L5 9z" fill="#fff" stroke="none" /></Ico></QuickMenu>
          <Title><span>Autodesk AutoCAD 2019</span><span>Пример.dwg</span></Title>
          <InfoBar>
            <SearchWrap>
              <Ico s={12}><path d="M5 2v8l4-4z" fill="#fff" stroke="none" /></Ico>
              <Search placeholder="Введите ключевое слово/фразу" aria-label="Поиск" />
            </SearchWrap>
            <InfoTools>
              <IconButton aria-label="Найти"><Ico><g stroke="#1f2733" fill="#e8e8e8"><path d="M1.500 16V9l2-6h3l1 6v7h-6zM16.500 16V9l-2-6h-3l-1 6v7h6z" /><path d="M7.500 6h3v4h-3z" /><path d="M1 11.500h6M11 11.500h6" /></g></Ico></IconButton>
              <IconButton aria-label="Профиль"><Ico><path d="M9 1q4 0 4 5t-3 6l7 3v2H1v-2l7-3Q5 11 5 6t4-5z" fill="#e8ecf2" stroke="#1f2733" /></Ico></IconButton>
              <TextButton>Вход в службы<Tri /></TextButton>
              <IconButton aria-label="Магазин"><Ico><path d="M1 3h4l2 9h8M5 5h12l-1 5H7z" stroke="#26304c" fill="#cfd8e4" /><circle cx="8" cy="15" r="1.500" fill="#fff" stroke="#26304c" /><circle cx="14" cy="15" r="1.500" fill="#fff" stroke="#26304c" /></Ico></IconButton>
              <TextButton aria-label="Приложения"><Ico><path d="M9 4 3 13h12z" stroke="#26304c" strokeWidth="3" strokeLinejoin="round" /><g fill="#dfe6f0" stroke="#26304c"><circle cx="9" cy="4" r="2.500" /><circle cx="3" cy="13" r="2.500" /><circle cx="15" cy="13" r="2.500" /></g><path d="M9 4 3 13h12z" stroke="#dfe6f0" strokeWidth="1.500" /></Ico><Tri /></TextButton>
              <Sep />
              <TextButton aria-label="Помощь"><Ico><circle cx="9" cy="9" r="8" fill="#eef2f8" stroke="#333" /><path d="M6.500 7q0-3 2.500-3t2.500 2.500Q11.500 8 9 10v1M9 12.500v2" stroke="#1d50a8" strokeWidth="2" /></Ico><Tri /></TextButton>
            </InfoTools>
          </InfoBar>
          <WinControls>
            <IconButton aria-label="Свернуть"><Ico s={16}><path d="M3 7.500h10" /></Ico></IconButton>
            <IconButton aria-label="Развернуть"><Ico s={16}><path d="M3.500 2.500h9v9h-9z" /></Ico></IconButton>
            <IconButton aria-label="Закрыть"><Ico s={16}><path d="m3 2 10 10M13 2 3 12" /></Ico></IconButton>
          </WinControls>
        </TitleBar>
        <MenuBar>
          {menu.map((m) => <a key={m} href="#">{m}</a>)}
          <DocControls>
            <IconButton aria-label="Свернуть чертеж"><Ico s={14}><path d="M2 9h10" strokeWidth="2" /></Ico></IconButton>
            <IconButton aria-label="Восстановить чертеж"><Ico s={14}><path d="M5 5V2h8v7h-3M1.500 5.500h8v6h-8z" strokeWidth="1.500" /></Ico></IconButton>
            <IconButton aria-label="Закрыть чертеж"><Ico s={14}><path d="m4 3 7 8M11 3l-7 8" strokeWidth="2" /></Ico></IconButton>
          </DocControls>
        </MenuBar>
        <TabStrip>
          <DocTab $w={124}>Начало</DocTab>
          <DocTab $w={123}>Чертеж1*<Ico s={8}><path d="m1 1 6 6M7 1 1 7" strokeWidth="2" stroke="#333" /></Ico></DocTab>
          <DocTab $w={125} $active>Пример*<Ico s={8}><path d="m1 1 6 6M7 1 1 7" strokeWidth="2" stroke="#444" /></Ico></DocTab>
          <NewTab aria-label="Новая вкладка"><Ico s={8}><path d="M4 0v8M0 4h8" strokeWidth="2" /></Ico></NewTab>
        </TabStrip>
        <ToolRow>
          <Bar $w={479}><Grip />{std.map((n, i) => <React.Fragment key={i}>{n}</React.Fragment>)}</Bar>
          <Bar $w={399}>
            <Grip />
            {layersIcon()}
            <ComboWrap $w={296}>
              <ComboIcons>
                <Ico s={12}><circle cx="6" cy="5" r="4" fill="#ffe08a" stroke="#555" /></Ico>
                <Ico s={12}><circle cx="6" cy="6" r="3" fill="#ffe08a" stroke="#555" /><path d="M6 0v12M0 6h12" stroke="#998" /></Ico>
                <Ico s={12}><path d="M1 1h8v8H1z" stroke="#555" /></Ico>
                <Ico s={12}><path d="M1 5h7v6H1z" fill="#ffd27a" /></Ico>
                <Ico s={12}><path d="M1 1h10v10H1z" fill="#000" /></Ico>
              </ComboIcons>
              <Combo $grey $pad={86} aria-label="Слой"><option>0</option></Combo><Chevron />
            </ComboWrap>
            {layersIcon(<><path d="M1 9l5-3h11l-5 3z" fill={SKY} stroke="none" /><circle cx="9" cy="4" r="3" fill="#ddd" stroke="none" /></>)}
            {layersIcon(<path d="M2 4h7q3 0 3 3M5 1 2 4l3 3" stroke={SKY} strokeWidth="2" />)}
            {layersIcon(<><path d="M8 9.500h9v7H8z" fill="#fff" stroke="#555" /><path d="M10 12h2M13 12h3M10 14h2M13 14h3" stroke="#555" /></>)}
          </Bar>
          <Bar>
            <Grip />
            <ComboWrap $w={149}>
              <ComboIcons><Ico s={11}><path d="M1 1h9v9H1z" fill="#000" stroke="#000" /></Ico></ComboIcons>
              <Combo $grey $pad={18} aria-label="Цвет"><option>ПоСлою</option></Combo><Chevron />
            </ComboWrap>
            <ComboWrap $w={150}>
              <ComboIcons><svg width="60" height="2" aria-hidden="true"><path d="M0 1h60" stroke="#000" /></svg></ComboIcons>
              <Combo $grey $pad={66} aria-label="Тип линии"><option>ПоСлою</option></Combo><Chevron />
            </ComboWrap>
          </Bar>
        </ToolRow>
        <Body>
          <Palette>
            <PaletteHead><Grip /></PaletteHead>
            <PaletteBody>
              <PaletteTabs>
                <PaletteTab aria-label="Ситуация"><Ico><path d="M5 1v15M2 5l3-3 3 3M1 9l4-4 4 4M1 13l4-4 4 4M13 10v7M11 16h5" /><path d="M13 1q3 2 3 6t-3 5q-3-1-3-5t3-6z" /></Ico></PaletteTab>
                <PaletteTab $active aria-label="Поверхность"><Ico><path d="M9 1 2 6 1 14l8 2 6-2 2-8zM9 1v8L1 14m8-5 6 5M9 9l8-3M9 9 2 6" fill="#dfe3e6" stroke="#555" /></Ico></PaletteTab>
                <PaletteTab aria-label="Правка"><Ico><path d="M11 4H2v12h14V9M4.500 13V9.500H8M8.500 13V9M12.500 13v-2M4 13h10" strokeWidth="1.200" stroke="#333" /><path d="m8 9 1-3 6-5 2 2-6 5z" fill="#444" stroke="none" /></Ico></PaletteTab>
                <PaletteTab aria-label="Справка"><Ico s={16}><rect x="1" y="1" width="14" height="14" rx="2" fill="#444" stroke="none" /><path d="M5.500 6q0-2.500 2.500-2.500t2.500 2.500Q10.500 7.500 8 9v1M8 11v2" stroke="#fff" strokeWidth="2" /></Ico></PaletteTab>
              </PaletteTabs>
              <PaletteSheet>
                <Groups>
                  <Group $top={4}>
                    <legend>Опции триангуляции</legend>
                    <Stack $gap={2}>
                      <Stack>
                        <CheckLabel><Tick type="checkbox" defaultChecked />выбор ограничивающего контура</CheckLabel>
                        <CheckLabel><Tick type="checkbox" />выбор ограничивающих островов</CheckLabel>
                        <CheckLabel><Tick type="checkbox" defaultChecked />выбор структурных линий</CheckLabel>
                        <CheckLabel><Tick type="checkbox" defaultChecked />выбор точек рельефа</CheckLabel>
                      </Stack>
                      <Layer value="_Tin-Surface" />
                      <Split>
                        <SubGroup $w={114}>
                          <legend>фильтр высот</legend>
                          <Stack $gap={2}>
                            <LabelRow><FieldName $w={41}>мин</FieldName><Field $w={60} defaultValue="-10000" /></LabelRow>
                            <LabelRow><FieldName $w={41}>макс</FieldName><Field $w={60} defaultValue="10000" /></LabelRow>
                          </Stack>
                        </SubGroup>
                        <Stack $gap={5}>
                          <ColorRow c="#00cfd1" pad={4} />
                          <Create $w={101}><Ico><path d="M8 3 1 8l2 9h10l2-8zM8 3v7L1 8m7 2-5 7m5-7 5 7" fill="#dfe3e6" stroke="#555" />{star(14, 4)}</Ico>Создать</Create>
                        </Stack>
                      </Split>
                    </Stack>
                  </Group>
                  <Group $top={3}>
                    <legend>Опции градиента</legend>
                    <Stack $gap={3}>
                      <LabelRow $gap={3}><Field $w={40} defaultValue="0" />макс уклон грани в градусах</LabelRow>
                      <Split><Swatch $c="#00ff00" $w={39} aria-label="начальный цвет" />градиент цвета<Swatch $c="#ff0000" $w={65} aria-label="конечный цвет" /></Split>
                      <Split>
                        <ChoicePad><Choice name="gradient" /></ChoicePad>
                        <Create><Ico><g stroke="#333" strokeWidth=".7"><path d="M9 1 2 8l7 2z" fill="#ffd21a" /><path d="m9 1 7 7-7 2z" fill="#ff8c1a" /><path d="m2 8 7 2-7 7z" fill="#1affa0" /><path d="m16 8-7 2 4 7z" fill="#5a7dff" /><path d="m9 10-7 7h11z" fill="#1af0ff" /></g></Ico>Создать</Create>
                      </Split>
                    </Stack>
                  </Group>
                  <Group $top={2}>
                    <legend>Опции эскизов горизонталей</legend>
                    <Stack $gap={3}>
                      <LabelRow $gap={3}><Field $w={40} defaultValue="0" />макс уклон грани в градусах</LabelRow>
                      <Layer value="_Tin-Sketch" />
                      <SubGroup>
                        <legend>шаг линий</legend>
                        <Stack $gap={2}>
                          <Split><LabelRow><FieldName $w={41}>основн</FieldName><Field $w={60} defaultValue="0.5" /></LabelRow><ColorRow c="#8000ff" /></Split>
                          <Split><LabelRow><FieldName $w={41}>утолщ</FieldName><Field $w={60} defaultValue="5" /></LabelRow><ColorRow c="#c080ff" /></Split>
                        </Stack>
                      </SubGroup>
                      <Split>
                        <ChoicePad><Choice name="sketch" /></ChoicePad>
                        <Create><Rhombs c="#f0f" />Создать</Create>
                      </Split>
                    </Stack>
                  </Group>
                  <Group $top={2}>
                    <legend>Опции горизонталей</legend>
                    <LabelRow $gap={3}><Field $w={40} defaultValue="1" /><span>мин. допустимое расстояние<br />между узлами линий эскиза</span></LabelRow>
                    <Split>
                      <ChoicePad><Choice name="contour" /></ChoicePad>
                      <Create><Rhombs c="#000" />Создать</Create>
                    </Split>
                  </Group>
                </Groups>
                <Commands>
                  {commands.map(([name, art]) => <Command key={name} aria-label={name}><Ico>{art}</Ico></Command>)}
                </Commands>
              </PaletteSheet>
              <PaletteFoot>
                <Progress />
                <CheckLabel><Tick type="checkbox" />OSNAPZ</CheckLabel>
              </PaletteFoot>
              <Version><Led />версия 2021.11.3 обновление не требуется!</Version>
            </PaletteBody>
          </Palette>
          <Main>
            <Work>
              <SideRail $w={30} $pad="1px 4px 0 1px">
                <ToolColumn><Grip $h /><Buttons items={draw} /></ToolColumn>
              </SideRail>
              <Canvas>
                <Mesh aria-hidden="true">
                  <g transform="translate(-320 -123)">
                    {edges.map(([a, b, c, d], i) => <line key={i} x1={a} y1={b} x2={c} y2={d} stroke="#1058a8" strokeWidth="1.400" />)}
                    <path d="M337 690v62h50M332 747h10v10h-10zM391 738l13 12M404 738l-13 12M339 684l5 8 5-8M344 692v6" stroke="#222" fill="none" />
                    {points.map(([x, y], i) => <g key={i} stroke="#111" fill="none"><circle cx={x} cy={y} r="4.500" /><path d={`M${x - 8} ${y}h16M${x} ${y - 8}v16`} /></g>)}
                  </g>
                </Mesh>
                {points.map(([x, y, t, c, fg], i) => (
                  <PointLabel key={i} $c={c} $fg={fg} style={{ left: x - 318, top: y - 141 }}>{t}</PointLabel>
                ))}
              </Canvas>
              <SideRail $w={32} $pad="0 3px 0 4px">
                <ToolColumn><Grip $h /><Buttons items={modify} /></ToolColumn>
                <ToolColumn><Grip $h /><Buttons items={order} /><Fly /><Buttons items={order2} /></ToolColumn>
              </SideRail>
            </Work>
            <CommandLine>
              <CommandHandle>
                <Grip $light />
                <IconButton aria-label="Закрыть"><Ico s={12}><path d="m2 2 8 8M10 2l-8 8" strokeWidth="2" /></Ico></IconButton>
                <IconButton aria-label="Настройка"><Ico s={18}><path d="M3 7q1 4 5 3l6 6 2-2-6-6q1-5-4-5l2 3-2 2z" fill="#eee" stroke="none" /></Ico></IconButton>
              </CommandHandle>
              <Prompt>
                <Ico s={15}><rect x=".5" y=".5" width="14" height="13" fill="#e6ebf0" stroke="#8a94a0" /><path d="m3 4 4 3-4 3M8 11h4" stroke="#333" /></Ico>
                <Tri c="#777" />
                <PromptInput placeholder="Введите команду" aria-label="Команда" />
              </Prompt>
            </CommandLine>
          </Main>
        </Body>
        <Bottom>
          <SheetTabs>
            <SheetTab $active $w={70}>Модель</SheetTab>
            <SheetTab $w={52}>Лист1</SheetTab>
            <SheetTab $w={52}>Лист2</SheetTab>
            <SheetTab $w={23}>+</SheetTab>
          </SheetTabs>
          <Status>
            <Cell $w={181} $end>2267979.79, 410508.81, 0.00</Cell>
            <Cell $w={57} $end>МОДЕЛЬ</Cell>
            <Cell $w={64}>
              <Ico><path d="M4.500 1v16M9.500 1v16M14.500 1v16M1 4.500h16M1 9.500h16M1 14.500h16" /></Ico>
              <Ico><g>{dots([[4, 4], [9, 4], [14, 4], [4, 9], [9, 9], [14, 9], [4, 14], [9, 14], [14, 14]], 1, "#e2e2e2")}</g></Ico>
              <Tri />
            </Cell>
            <Cell $w={190}>
              <Ico><path d="M5 1v8M1 5h8" /><path d="M7 11h11v5H7z" fill="#ddd" stroke="none" /></Ico>
              <Rule />
              <Ico><path d="M2.500 1v15H18M2 11.500h5.500V16" /></Ico>
              <Ico><circle cx="8" cy="10" r="6.500" /><path d="M17 10.500H8L15 3" /></Ico>
              <Tri />
              <Ico><path d="m2 2 13 14" stroke="#e0605a" /><path d="M9 1v16" stroke="#5fdc8a" /><path d="M7 8h4v4H7z" fill="#777" /></Ico>
              <Tri />
              <Rule />
              <Ico><path d="M17 14.500H1L13 3" /></Ico>
              <Ico><path d="M4 3h13v13H4V5" /><path d="M1.500 1.500h5v5h-5z" fill="#4f4f4f" stroke="#ffa060" strokeWidth="1.500" /></Ico>
              <Tri />
            </Cell>
            <Toggle $on aria-label="Вес линий"><Ico><path d="M1 3.500h16M1 7.500h10M1 11.500h16M1 15.500h12" strokeWidth="2" /></Ico></Toggle>
            <Cell $w={84}>
              <Toggle $on aria-label="Видимость аннотаций"><Ico><path d="M8 1q1 2 2 8l6 7-6-2-2-3-2 3-5 2 5-7q1-6 2-8z" fill="#fff" stroke="none" /><circle cx="14" cy="4" r="2.500" /></Ico></Toggle>
              <Ico><path d="M9 2q1 2 2 7l5 7-5-1-2-4-2 4-5 1 5-7q1-5 2-7z" fill="#ddd" stroke="none" /></Ico>
              1:1
              <Tri />
            </Cell>
            <Cell $w={41}><Ico><circle cx="9" cy="9" r="4.500" strokeWidth="3" /><path d="M9 1v3M9 14v3M1 9h3M14 9h3M3.500 3.500l2 2M12.500 12.500l2 2M14.500 3.500l-2 2M5.500 12.500l-2 2" strokeWidth="3" /></Ico><Tri /></Cell>
            <Cell $w={26}><Ico><path d="M2 2h6v6H2zM9 10l4 7H5z" /><circle cx="14" cy="7" r="3" /></Ico></Cell>
            <Cell $w={51}>
              <Ico><path d="M1 1h9l4 4v10H1z" fill="#54b0f0" stroke="none" /><path d="M1 11h8v5H1z" fill="#ffd83a" stroke="none" /><path d="M2 6h8M6 2v8" stroke="#fff" /><path d="m8 12 3 4 6-6" stroke="#28a745" strokeWidth="2.500" /></Ico>
              <Ico><path d="M1 2h14v11H1z" fill="#eee" stroke="none" /><path d="m2 4 4 6 4-6 4 6" stroke="#555" strokeWidth="1.500" /><path d="m12 6 6 11H7z" fill="#ee7a22" stroke="none" /><path d="M12.500 10v3M12.500 14v1.500" stroke="#fff" /></Ico>
            </Cell>
            <Cell $w={49}>
              <Ico><path d="M1.500 3.500h15v11h-15z" strokeWidth="1.500" /><path d="M4 10v3h3M11 5h3v3M4.500 12.500 7 10M13.500 5.500 11 8" /></Ico>
              <Ico><path d="M1 3h16M1 9h16M1 15h16" strokeWidth="2" /></Ico>
            </Cell>
          </Status>
        </Bottom>

        <Banner $x={49} $y={75} $w={758} $h={55} $size={36}>Расширен фильтр высот от 1 000 до 10 000</Banner>
        <Banner $x={241} $y={656} $w={773} $h={52} $size={32}>Новая команда - Создать 3Д точку на поверхности</Banner>
        <Marks viewBox="0 0 1164 849" aria-hidden="true">
          <defs>
            <marker id="tip" markerUnits="userSpaceOnUse" markerWidth="15" markerHeight="12" refX="14" refY="6" orient="auto">
              <path d="M0 0 15 6 0 12 2 6z" fill={RED} />
            </marker>
          </defs>
          {arrows.map(([a, b, c, d], i) => <line key={i} x1={a} y1={b} x2={c} y2={d} stroke={RED} strokeWidth="2" markerEnd="url(#tip)" />)}
          <path d="M138 289 249 148l-4-4 18-5-1 18-5-4L141 291z" fill={RED} />
          <rect x="22" y="288" width="118" height="66" rx="4" fill="none" stroke={RED} strokeWidth="4" />
          <rect x="257" y="628" width="33" height="33" rx="4" fill="none" stroke={RED} strokeWidth="4" />
        </Marks>
      </Window>
    </Page>
  );
}
